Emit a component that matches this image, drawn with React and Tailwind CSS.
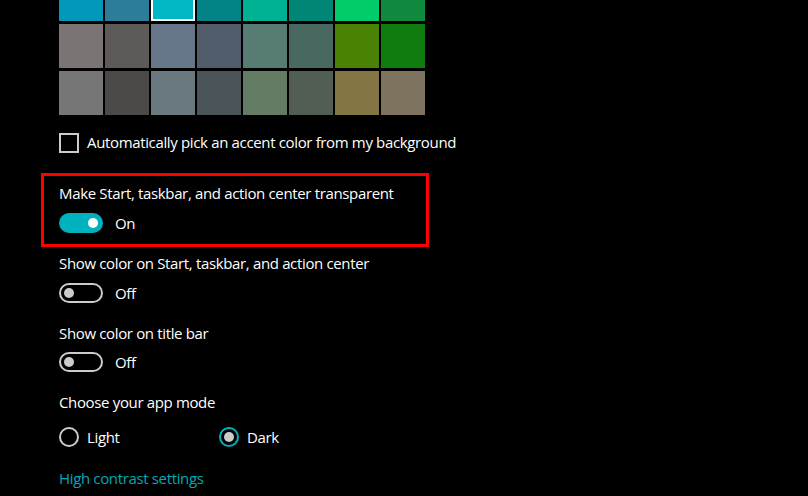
const swatches = [
  ["#0099bc", "#2d7d9a", "#00b7c3", "#038387", "#00b294", "#018574", "#00cc6a", "#10893e"],
  ["#7a7574", "#5d5a58", "#68768a", "#515c6b", "#567c73", "#486860", "#498205", "#107c10"],
  ["#767676", "#4c4a48", "#69797e", "#4a5459", "#647c64", "#525e54", "#847545", "#7e735f"],
]

function Toggle({ on }) {
  return (
    <div className="flex items-center gap-3 h-5">
      {on ? (
        <div className="w-11 h-5 rounded-full bg-[#00b1be] flex items-center justify-end pr-[5px]">
          <div className="w-[10px] h-[10px] rounded-full bg-white" />
        </div>
      ) : (
        <div className="w-11 h-5 rounded-full border-2 border-[#cccccc] flex items-center pl-[3px]">
          <div className="w-[10px] h-[10px] rounded-full bg-[#cccccc]" />
        </div>
      )}
      <span className="leading-5">{on ? "On" : "Off"}</span>
    </div>
  )
}

function Radio({ label, checked }) {
  return (
    <div className="flex items-center gap-2 h-5">
      <div className={`w-5 h-5 rounded-full border-2 flex items-center justify-center ${checked ? "border-[#00b1be]" : "border-[#cccccc]"}`}>
        {checked && <div className="w-[10px] h-[10px] rounded-full bg-[#cccccc]" />}
      </div>
      <span className="leading-5">{label}</span>
    </div>
  )
}

export default function App() {
  return (
    <div className="w-[808px] h-[496px] overflow-hidden bg-black text-white text-[15px] tracking-[-0.35px] font-['Open_Sans','Segoe_UI',sans-serif] pl-[41px]">
      {/* accent colour grid */}
      <div className="ml-[18px] mt-[-23px] flex flex-col gap-[3px]">
        {swatches.map((row, r) => (
          <div key={r} className="flex gap-[2px]">
            {row.map((c, i) => (
              <div
                key={c}
                className={`w-11 h-11 ${r === 0 && i === 2 ? "border-2 border-white" : ""}`}
                style={{ backgroundColor: c }}
              />
            ))}
          </div>
        ))}
      </div>

      <div className="ml-[18px] mt-[18px] flex items-center gap-2 h-5">
        <div className="w-5 h-5 border-2 border-[#cccccc]" />
        <span className="leading-5 -mt-[2px]">Automatically pick an accent color from my background</span>
      </div>

      <div className="mt-[20px] w-[388px] border-[3px] border-[#ff0000] pl-[15px] pt-[7px] pb-[11px]">
        <div className="h-5 leading-5">Make Start, taskbar, and action center transparent</div>
        <div className="mt-[10px]">
          <Toggle on />
        </div>
      </div>

      <div className="ml-[18px]">
        <div className="mt-[6px] h-5 leading-5">Show color on Start, taskbar, and action center</div>
        <div className="mt-[10px]">
          <Toggle on={false} />
        </div>

        <div className="mt-[20px] h-5 leading-5">Show color on title bar</div>
        <div className="mt-[9px]">
          <Toggle on={false} />
        </div>

        <div className="mt-[20px] h-5 leading-5">Choose your app mode</div>
        <div className="mt-[15px] flex">
          <div className="w-40">
            <Radio label="Light" />
          </div>
          <Radio label="Dark" checked />
        </div>

        <div className="mt-[21px] h-5 leading-5 text-[#00a8b8]">High contrast settings</div>
      </div>
    </div>
  )
}
